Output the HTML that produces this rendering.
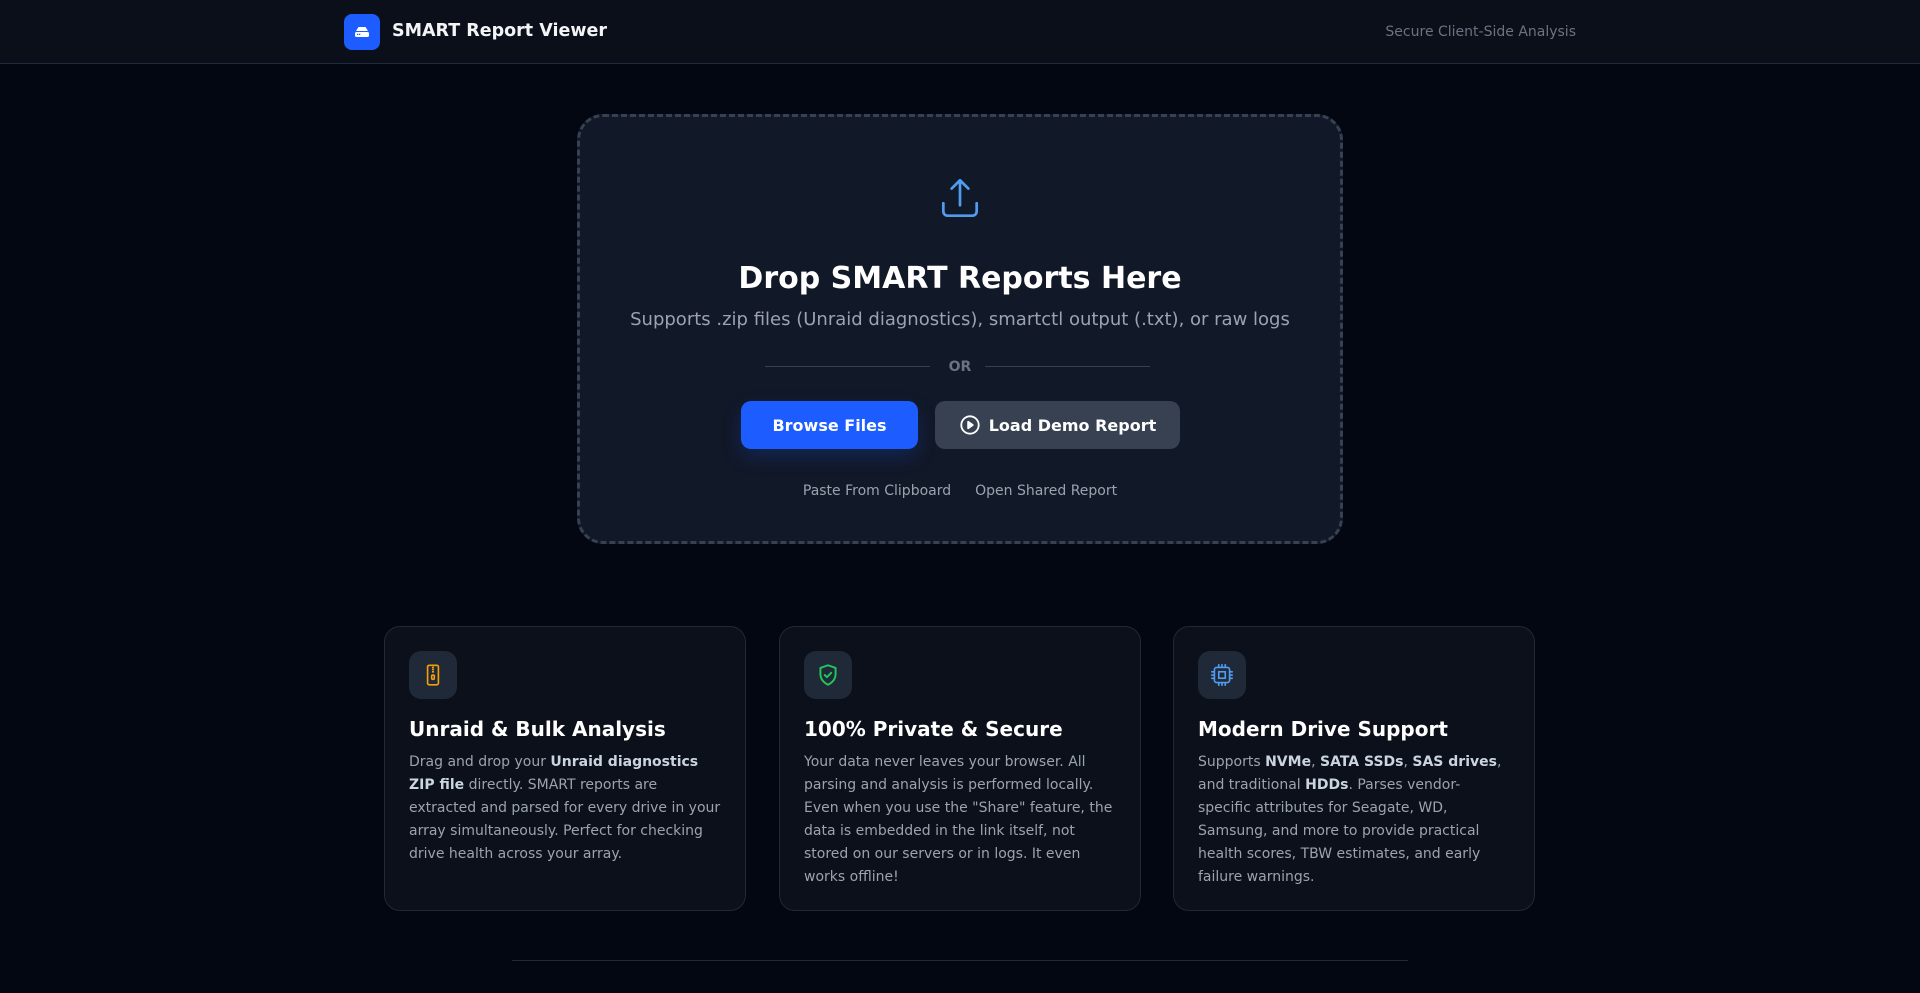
<!DOCTYPE html>
<html><head><meta charset="utf-8"><style>
*{box-sizing:border-box;margin:0;padding:0}
body{width:1920px;height:993px;overflow:hidden;background:#030712;font-family:"DejaVu Sans","Liberation Sans",sans-serif;color:#f3f4f6}
header{height:64px;background:#0a0f1a;border-bottom:1px solid #1e293b;position:relative}
.logo{position:absolute;left:344px;top:14px;width:36px;height:36px;background:#1d5cff;border-radius:8px}
.brand{position:absolute;left:392px;top:21px;font-size:17.5px;font-weight:bold;color:#f3f4f6}
.sec{position:absolute;right:344px;top:24px;font-size:14px;color:#6b7280}
.drop{position:absolute;left:577px;top:114px;width:766px;height:430px;border:3px dashed #374151;border-radius:26px;background:#111827;text-align:center}
.drop h1{position:absolute;left:0;right:0;top:144px;font-size:30px;font-weight:bold;color:#fff}
.drop .sub{position:absolute;left:0;right:0;top:192px;font-size:18px;color:#9ca3af}
.or{position:absolute;top:242px;left:0;right:0;font-size:14px;font-weight:bold;color:#6b7280}
.ln{position:absolute;top:249px;height:1px;background:#374151;width:165px}
.btn{position:absolute;top:284px;height:48px;border-radius:10px;font-size:16px;font-weight:bold;color:#fff;display:flex;align-items:center;justify-content:center}
.b1{left:161px;width:177px;background:#1d5cff;box-shadow:0 8px 20px rgba(29,92,255,.2)}
.b2{left:355px;width:245px;background:#374151}
.links{position:absolute;top:366px;left:0;right:0;font-size:14px;color:#9ca3af}
.links span{margin:0 12px}
.card{position:absolute;top:626px;width:362px;height:285px;background:#0b101a;border:1px solid #1f2937;border-radius:16px;padding:24px}
.ic{width:48px;height:48px;background:#1f2937;border-radius:12px;display:flex;align-items:center;justify-content:center}
.card h3{margin-top:16px;font-size:20px;font-weight:bold;color:#fff;line-height:28px}
.card p{margin-top:8px;font-size:14px;line-height:23px;color:#9ca3af}
.card b{color:#cbd5e1}
.foot{position:absolute;left:512px;top:960px;width:896px;height:1px;background:#1f2937}
</style></head><body>
<header>
<div class="logo"><svg width="36" height="36" viewBox="0 0 36 36"><path d="M12 17 L14.5 13 H21.5 L24 17 Z" fill="#fff"/><rect x="11" y="18" width="14" height="5" rx="1.5" fill="#fff"/><rect x="13" y="19.7" width="1.3" height="1.3" fill="#1d5cff"/><rect x="15" y="19.7" width="1.3" height="1.3" fill="#1d5cff"/></svg></div>
<div class="brand">SMART Report Viewer</div>
<div class="sec">Secure Client-Side Analysis</div>
</header>
<div class="drop">
<svg style="position:absolute;left:355px;top:57px" width="50" height="50" viewBox="0 0 24 24" fill="none" stroke="#4f9cf0" stroke-width="1.3" stroke-linecap="round" stroke-linejoin="round"><path d="M12 3v12M8 7l4-4 4 4"/><path d="M4 14v4a2 2 0 0 0 2 2h12a2 2 0 0 0 2-2v-4"/></svg>
<h1>Drop SMART Reports Here</h1>
<div class="sub">Supports .zip files (Unraid diagnostics), smartctl output (.txt), or raw logs</div>
<div class="ln" style="left:185px"></div><div class="or">OR</div><div class="ln" style="left:405px"></div>
<div class="btn b1">Browse Files</div>
<div class="btn b2"><svg width="22" height="22" viewBox="0 0 24 24" fill="none" stroke="#fff" stroke-width="2" style="margin-right:8px"><circle cx="12" cy="12" r="9.5"/><path d="M10 8.5l5 3.5-5 3.5z" fill="#fff" stroke-linejoin="round"/></svg>Load Demo Report</div>
<div class="links"><span>Paste From Clipboard</span><span>Open Shared Report</span></div>
</div>
<div class="card" style="left:384px"><div class="ic"><svg width="26" height="26" viewBox="0 0 24 24" fill="none" stroke="#f59e0b" stroke-width="1.5"><rect x="7" y="3" width="10" height="18" rx="1.5"/><path d="M11 5h2M11 7h2M11 9h2"/><rect x="10.8" y="12" width="2.4" height="4" rx="1"/></svg></div>
<h3>Unraid &amp; Bulk Analysis</h3>
<p>Drag and drop your <b>Unraid diagnostics ZIP file</b> directly. SMART reports are extracted and parsed for every drive in your array simultaneously. Perfect for checking drive health across your array.</p></div>
<div class="card" style="left:779px"><div class="ic"><svg width="26" height="26" viewBox="0 0 24 24" fill="none" stroke="#22c55e" stroke-width="1.8" stroke-linejoin="round" stroke-linecap="round"><path d="M12 3l7 2.5v5.5c0 4.5-3 8-7 10-4-2-7-5.5-7-10V5.5z"/><path d="M9 12l2 2 4-4"/></svg></div>
<h3>100% Private &amp; Secure</h3>
<p>Your data never leaves your browser. All parsing and analysis is performed locally. Even when you use the "Share" feature, the data is embedded in the link itself, not stored on our servers or in logs. It even works offline!</p></div>
<div class="card" style="left:1173px"><div class="ic"><svg width="26" height="26" viewBox="0 0 24 24" fill="none" stroke="#4f9cf0" stroke-width="1.5"><rect x="5" y="5" width="14" height="14" rx="2"/><rect x="9" y="9" width="6" height="6"/><path d="M9 2v3M12 2v3M15 2v3M9 19v3M12 19v3M15 19v3M2 9h3M2 12h3M2 15h3M19 9h3M19 12h3M19 15h3"/></svg></div>
<h3>Modern Drive Support</h3>
<p>Supports <b>NVMe</b>, <b>SATA SSDs</b>, <b>SAS drives</b>, and traditional <b>HDDs</b>. Parses vendor-specific attributes for Seagate, WD, Samsung, and more to provide practical health scores, TBW estimates, and early failure warnings.</p></div>
<div class="foot"></div>
</body></html>
